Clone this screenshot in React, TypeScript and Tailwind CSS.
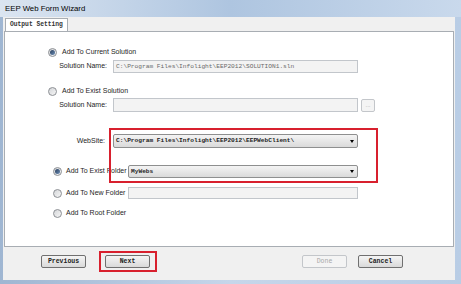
import React from "react"

const ui = { fontFamily: '"Liberation Sans", Arial, sans-serif' }
const mono = { fontFamily: '"Liberation Mono", "Courier New", monospace' }

const Radio = ({ checked }: { checked?: boolean }) => (
    <div className="w-[9px] h-[9px] rounded-full border border-[#8c8f94] bg-linear-to-br from-[#d4d6d9] to-[#f6f6f6] flex items-center justify-center shrink-0">
        {checked && <div className="w-[5px] h-[5px] rounded-full bg-linear-to-br from-[#2a3f5c] to-[#6d8fb8]" />}
    </div>
)

const TextBox = ({ width, text }: { width: string; text?: string }) => (
    <div className={`${width} h-full border border-[#c2c6cb] bg-[#f3f3f3] flex items-center px-[2px] text-[6.2px] text-[#6a6a6a] whitespace-nowrap overflow-hidden`} style={mono}>
        {text}
    </div>
)

const Combo = ({ width, text }: { width: string; text: string }) => (
    <div className={`${width} h-full border border-[#8e8f8f] rounded-[2px] bg-linear-to-b from-[#f4f4f4] to-[#dadada] flex items-center justify-between px-[2px] text-[6.2px] font-bold text-[#222] whitespace-nowrap`} style={mono}>
        <span>{text}</span>
        <span className="w-0 h-0 border-l-[2.5px] border-r-[2.5px] border-t-[3px] border-l-transparent border-r-transparent border-t-black mr-[1px]" />
    </div>
)

const Btn = ({ title, disabled }: { title: string; disabled?: boolean }) => (
    <div className={`w-[45px] h-[13px] rounded-[2px] border flex items-center justify-center text-[6.5px] font-bold ${disabled ? "border-[#c3c6ca] bg-[#f4f4f4] text-[#a8a8a8] font-normal" : "border-[#707070] bg-linear-to-b from-[#f5f5f5] to-[#d9d9d9] text-[#222]"}`} style={mono}>
        {title}
    </div>
)

export default function App() {
    return (
        <div className="w-[461px] h-[284px] flex flex-col bg-linear-to-r from-[#9fb6d2] via-[#c6d6ea] to-[#b9cde5] overflow-hidden text-[#1e1e1e]" style={ui}>
            {/* title bar */}
            <div className="h-[17px] shrink-0 flex items-center pl-[5px] text-[7.8px] text-black bg-linear-to-r from-[#dbe5f1] via-[#aec5e0] to-[#c9d9ec]">
                EEP Web Form Wizard
            </div>
            <div className="flex-1 flex flex-col ml-[3px] mr-[6px] bg-[#f0f0f0]">
                {/* tab strip */}
                <div className="h-[14px] shrink-0 flex items-end px-[2px] pt-[1px]">
                    <div className="h-full px-[4px] bg-white border border-b-0 border-[#a8adb3] flex items-center text-[6.3px] font-bold text-[#333]" style={mono}>
                        Output Setting
                    </div>
                </div>
                {/* panel */}
                <div className="h-[216px] shrink-0 relative bg-white border border-[#a8adb3] mx-[1px] pt-[14px] text-[7px] whitespace-nowrap">
                    <div className="h-[12px] flex items-center gap-[5px] pl-[43px]">
                        <Radio checked />
                        <span>Add To Current Solution</span>
                    </div>
                    <div className="h-[13px] mt-[2px] flex items-center">
                        <div className="w-[108px] text-right pr-[6px]">Solution Name:</div>
                        <TextBox width="w-[245px]" text="C:\Program Files\Infolight\EEP2012\SOLUTION1.sln" />
                    </div>
                    <div className="h-[12px] mt-[12px] flex items-center gap-[5px] pl-[43px]">
                        <Radio />
                        <span>Add To Exist Solution</span>
                    </div>
                    <div className="h-[14px] mt-[1px] flex items-center">
                        <div className="w-[108px] text-right pr-[6px]">Solution Name:</div>
                        <TextBox width="w-[245px]" />
                        <div className="ml-[3px] w-[14px] h-[13px] border border-[#c3c6ca] bg-[#f4f4f4] rounded-[2px] text-[6px] text-[#aaa] flex items-center justify-center">...</div>
                    </div>
                    <div className="h-[14px] mt-[22px] flex items-center">
                        <div className="w-[108px] text-right pr-[8px]">WebSite:</div>
                        <Combo width="w-[245px]" text="C:\Program Files\Infolight\EEP2012\EEPWebClient\" />
                    </div>
                    <div className="h-[13px] mt-[17px] flex items-center">
                        <div className="w-[123px] flex items-center gap-[4px] pl-[48px]">
                            <Radio checked />
                            <span>Add To Exist Folder</span>
                        </div>
                        <Combo width="w-[230px]" text="MyWebs" />
                    </div>
                    <div className="h-[12px] mt-[9px] flex items-center">
                        <div className="w-[123px] flex items-center gap-[4px] pl-[48px]">
                            <Radio />
                            <span>Add To New Folder</span>
                        </div>
                        <TextBox width="w-[230px]" />
                    </div>
                    <div className="h-[12px] mt-[8px] flex items-center gap-[4px] pl-[48px]">
                        <Radio />
                        <span>Add To Root Folder</span>
                    </div>
                    {/* annotation */}
                    <div className="absolute left-[104px] top-[96px] w-[269px] h-[55px] border-2 border-[#d8202e]" />
                </div>
                {/* buttons */}
                <div className="flex-1 relative flex items-start pt-[8px] pl-[38px]">
                    <Btn title="Previous" />
                    <div className="ml-[19px]"><Btn title="Next" /></div>
                    <div className="ml-auto"><Btn title="Done" disabled /></div>
                    <div className="ml-[11px] mr-[52px]"><Btn title="Cancel" /></div>
                    <div className="absolute left-[96px] top-[4px] w-[58px] h-[21px] border-2 border-[#d8202e]" />
                </div>
            </div>
            <div className="h-[4px] shrink-0" />
        </div>
    )
}
